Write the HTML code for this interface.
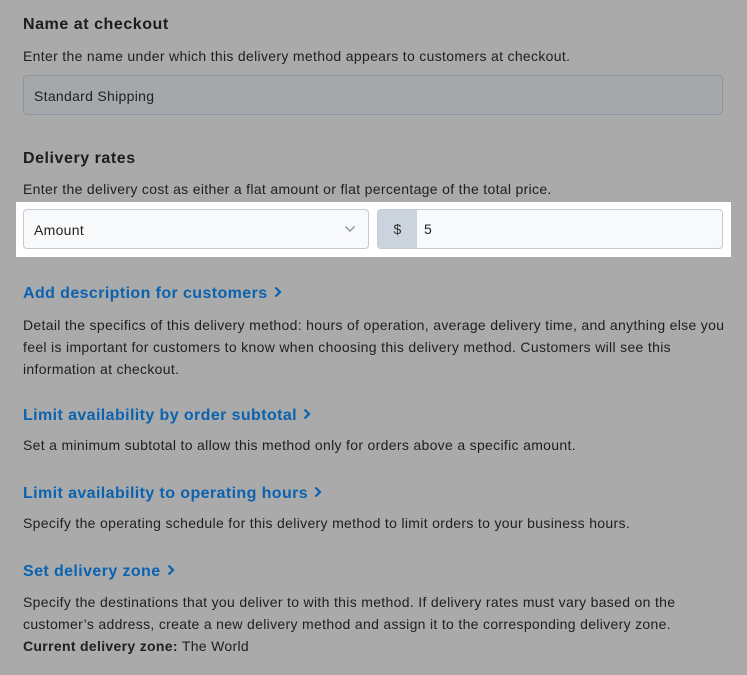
<!DOCTYPE html>
<html><head><style>
body{margin:0;width:747px;height:675px;background:#aaaaaa;font-family:"Liberation Sans",sans-serif;color:#1f1f1f;position:relative;overflow:hidden}
.a{position:absolute;left:23px;white-space:nowrap}
.h{font-size:16px;font-weight:bold;color:#1c1c1c;letter-spacing:0.55px}
.p{font-size:14px;line-height:22px;letter-spacing:0.32px}
.l{font-size:16px;font-weight:bold;color:#0a62b0;letter-spacing:0.4px}
.l svg{margin-left:6px;vertical-align:0px}
.box{position:absolute;border:1px solid #8e959c;border-radius:4px;box-sizing:border-box;font-size:14px;letter-spacing:0.3px}
</style></head><body>
<div class="a h" style="top:16px">Name at checkout</div>
<div class="a p" style="top:45px">Enter the name under which this delivery method appears to customers at checkout.</div>
<div class="box" style="left:23px;top:75px;width:700px;height:40px;background:#a5a8ab;padding:12px 0 0 10px">Standard Shipping</div>
<div class="a h" style="top:150px">Delivery rates</div>
<div class="a p" style="top:178px">Enter the delivery cost as either a flat amount or flat percentage of the total price.</div>
<div style="position:absolute;left:16px;top:202px;width:715px;height:55px;background:#fff"></div>
<div class="box" style="left:23px;top:209px;width:346px;height:40px;background:#f8f9fb;border-color:#c2cad4;padding:12px 0 0 10px;color:#222">Amount
<svg style="position:absolute;right:12px;top:15px" width="12" height="8" viewBox="0 0 12 8"><path d="M1.5 1.5L6 6l4.5-4.5" fill="none" stroke="#9aa3ad" stroke-width="1.6"/></svg></div>
<div class="box" style="left:377px;top:209px;width:346px;height:40px;background:#f8f9fb;border-color:#c2cad4;overflow:hidden">
<div style="position:absolute;left:0;top:0;width:39px;height:38px;background:#cbd3dc;text-align:center;line-height:38px;color:#333">$</div>
<div style="position:absolute;left:46px;top:0;line-height:38px;color:#222">5</div></div>
<div class="a l" style="top:285px">Add description for customers<svg width="8" height="12" viewBox="0 0 8 12"><path d="M1.5 1.5L6 6l-4.5 4.5" fill="none" stroke="#0a62b0" stroke-width="2.2"/></svg></div>
<div class="a p" style="top:314px">Detail the specifics of this delivery method: hours of operation, average delivery time, and anything else you<br>feel is important for customers to know when choosing this delivery method. Customers will see this<br>information at checkout.</div>
<div class="a l" style="top:407px">Limit availability by order subtotal<svg width="8" height="12" viewBox="0 0 8 12"><path d="M1.5 1.5L6 6l-4.5 4.5" fill="none" stroke="#0a62b0" stroke-width="2.2"/></svg></div>
<div class="a p" style="top:434px">Set a minimum subtotal to allow this method only for orders above a specific amount.</div>
<div class="a l" style="top:485px">Limit availability to operating hours<svg width="8" height="12" viewBox="0 0 8 12"><path d="M1.5 1.5L6 6l-4.5 4.5" fill="none" stroke="#0a62b0" stroke-width="2.2"/></svg></div>
<div class="a p" style="top:512px">Specify the operating schedule for this delivery method to limit orders to your business hours.</div>
<div class="a l" style="top:563px">Set delivery zone<svg width="8" height="12" viewBox="0 0 8 12"><path d="M1.5 1.5L6 6l-4.5 4.5" fill="none" stroke="#0a62b0" stroke-width="2.2"/></svg></div>
<div class="a p" style="top:591px">Specify the destinations that you deliver to with this method. If delivery rates must vary based on the<br>customer’s address, create a new delivery method and assign it to the corresponding delivery zone.<br><b>Current delivery zone:</b> The World</div>
</body></html>
